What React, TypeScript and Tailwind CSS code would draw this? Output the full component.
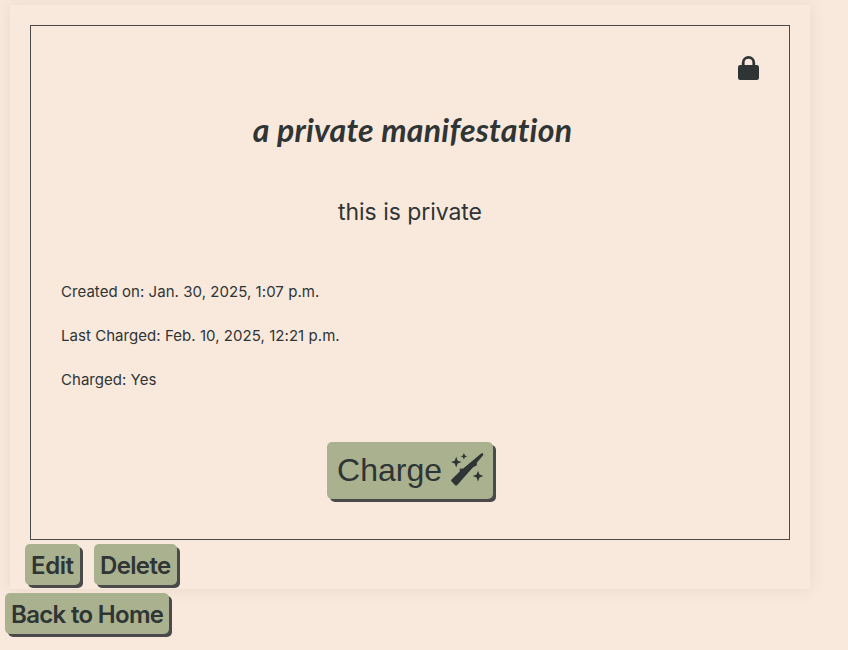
import type { ReactNode } from "react";

function LockIcon() {
  return (
    <svg width="21" height="24" viewBox="0 0 21 24" className="block" aria-label="Private">
      <rect x="0" y="9" width="21" height="15" rx="2.3" fill="#2f3435" />
      <path d="M5.2 10V6.7a5.3 5.3 0 0 1 10.6 0V10" fill="none" stroke="#2f3435" strokeWidth="2.8" />
    </svg>
  );
}

function WandIcon() {
  return (
    <svg width="33" height="33" viewBox="0 0 33 33" className="block shrink-0" fill="#2f3435">
      <path d="M31.9.6c-.7-.5-1.6-.3-2.3.3L12.2 15.5l-3.6.3.2 2.6L.8 26.3c-.8.8-.9 1.6-.2 2.3l3.3 3.5c.8.7 1.7.7 2.4-.1l15.5-17.6 4.1-2.2-.1-2.5 6.3-7.4c.4-.5.3-1.3-.2-1.7z" />
      <path d="M5.2 3.7l1.5 4 3.8 1.4-3.8 1.4-1.5 4-1.5-4L0 9.1l3.7-1.4z" />
      <path d="M12.9 0l1 2.4 2.4.9-2.4.9-1 2.4-1-2.4-2.3-.9 2.3-.9z" />
      <path d="M27 17.7l1.5 3.9 3.9 1.4-3.9 1.4-1.5 4-1.4-4-3.9-1.4 3.9-1.4z" />
    </svg>
  );
}

function ActionButton({ children, className }: { children: ReactNode; className: string }) {
  return (
    <button
      className={`h-[41px] rounded-[5px] bg-[#a9b18f] pt-px pl-[6px] text-left text-[24px] leading-[42px] font-semibold whitespace-nowrap text-[#2f3435] shadow-[3px_3px_0_#4a4a4a] ${className}`}
    >
      {children}
    </button>
  );
}

export default function App() {
  return (
    <div className="min-h-screen overflow-hidden bg-[#f9e9dc] pt-[5px] font-['Inter','Liberation_Sans',sans-serif] text-[#2f3435]">
      <main className="ml-[10px] h-[584px] w-[800px] pt-5 shadow-[0_0_15px_rgba(74,74,74,0.1)]">
        <section className="mx-5 flex h-[515px] flex-col border border-[#4a4a4a] px-[30px] pt-[30px]">
          <div className="flex h-6 justify-end">
            <LockIcon />
          </div>
          <h1 className="mt-[25px] h-[50px] pl-[5px] text-center font-['Lato',cursive] text-[32px] leading-[50px] font-bold tracking-[0.27px] whitespace-nowrap italic">
            a private manifestation
          </h1>
          <p className="mt-[42px] h-[30px] text-center text-[23px] leading-[30px] tracking-[-0.05px]">this is private</p>
          <div className="mt-[55px] flex flex-col gap-6 text-[15px] leading-5">
            <p className="tracking-[0.05px]">Created on: Jan. 30, 2025, 1:07 p.m.</p>
            <p className="tracking-[0.05px]">Last Charged: Feb. 10, 2025, 12:21 p.m.</p>
            <p className="tracking-[0.03px]">Charged: Yes</p>
          </div>
          <button className="mt-[52px] ml-[266px] flex h-[57px] w-[166px] items-center gap-2 rounded-[5px] bg-[#a9b18f] pl-[9.5px] font-['Liberation_Sans',Arial,sans-serif] text-[32px] leading-none whitespace-nowrap shadow-[3px_3px_0_#4a4a4a]">
            <span className="w-[106px] -translate-y-px">Charge</span>
            <span className="-translate-y-px"><WandIcon /></span>
          </button>
        </section>
        <div className="mt-1 ml-[15px] flex gap-[14px]">
          <ActionButton className="w-[55px] tracking-[-0.4px]">Edit</ActionButton>
          <ActionButton className="w-[83px] tracking-[-0.65px]">Delete</ActionButton>
        </div>
      </main>
      <div className="mt-1 ml-[5px] flex">
        <ActionButton className="w-[164px] tracking-[-0.68px]">Back to Home</ActionButton>
      </div>
    </div>
  );
}
